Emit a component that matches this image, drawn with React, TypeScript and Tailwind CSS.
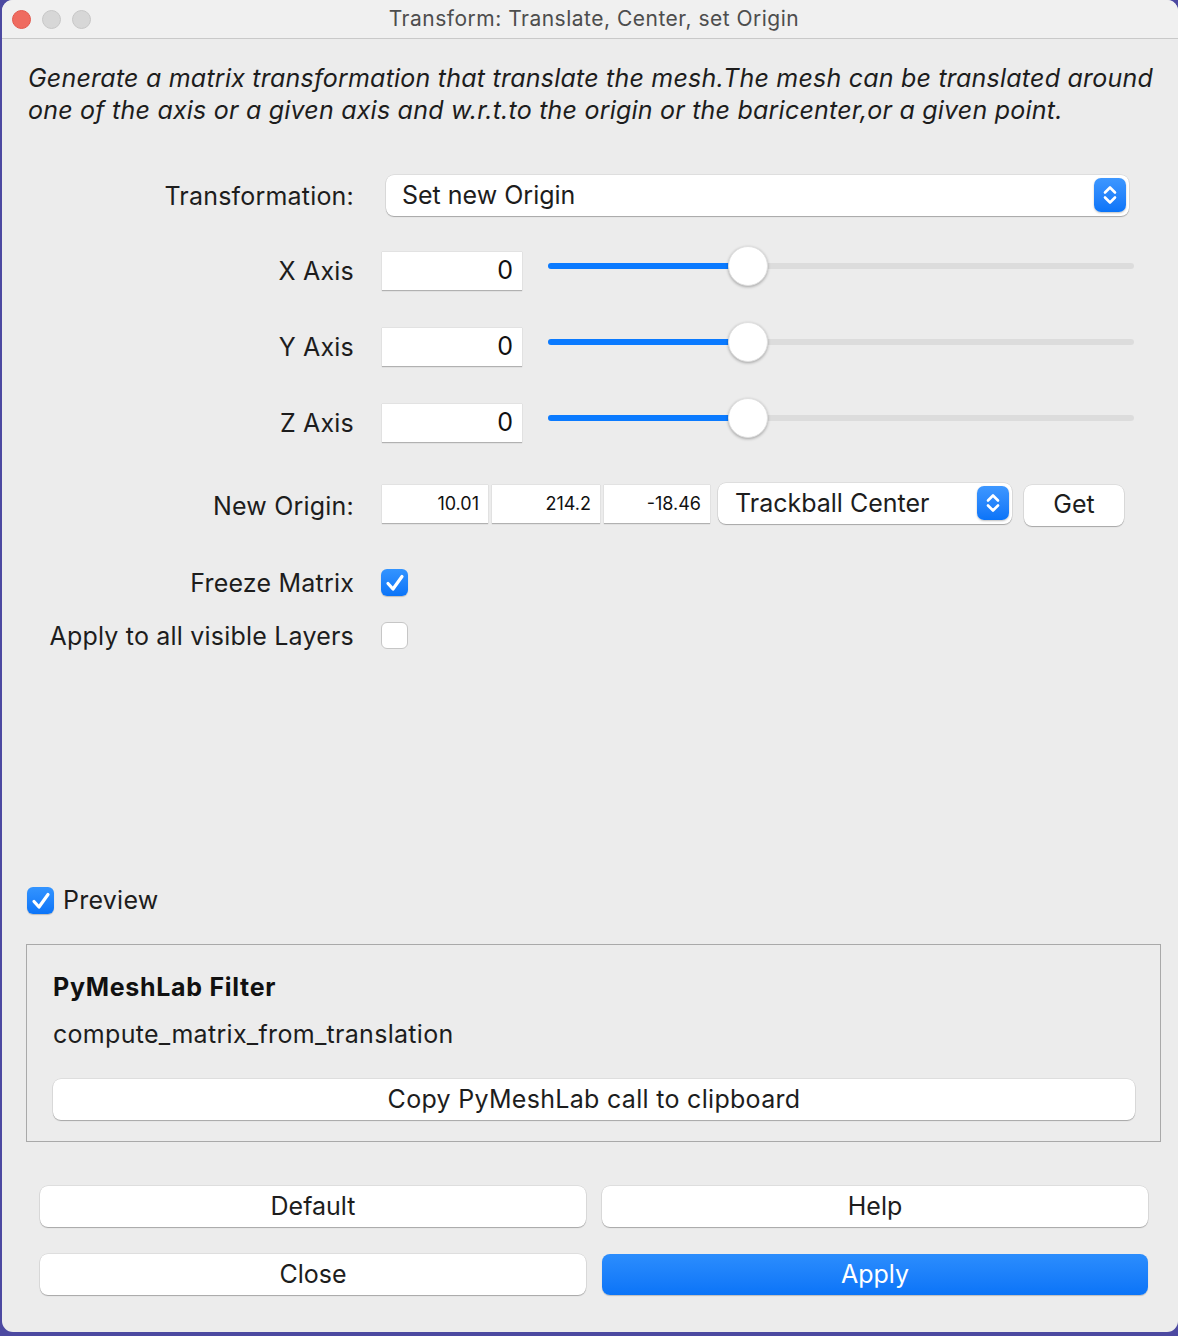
import React from "react";

const font = { fontFamily: "Inter, 'Liberation Sans', sans-serif" };

function Stepper({ size = 34 }: { size?: number }) {
  return (
    <div
      className="flex items-center justify-center rounded-[7px] bg-gradient-to-b from-[#3d97ff] to-[#0a74f8] shadow-[0_1px_2px_rgba(0,0,0,0.25)]"
      style={{ width: size - 2, height: size }}
    >
      <svg width="16" height="24" viewBox="0 0 16 24" fill="none">
        <path d="M3 9.5 L8 4.5 L13 9.5" stroke="white" strokeWidth="2.6" strokeLinecap="round" strokeLinejoin="round" />
        <path d="M3 14.5 L8 19.5 L13 14.5" stroke="white" strokeWidth="2.6" strokeLinecap="round" strokeLinejoin="round" />
      </svg>
    </div>
  );
}

function Check({ checked }: { checked: boolean }) {
  if (!checked)
    return <div className="w-[27px] h-[27px] rounded-[6px] bg-white border border-[#c6c6c6]" />;
  return (
    <div className="w-[27px] h-[27px] rounded-[6px] bg-gradient-to-b from-[#3394ff] to-[#0a74f8] flex items-center justify-center shadow-[0_1px_1px_rgba(0,0,0,0.2)]">
      <svg width="24" height="24" viewBox="0 0 24 24" fill="none">
        <path d="M5 12.5 L10 18 L19 5.5" stroke="white" strokeWidth="3.2" strokeLinecap="round" strokeLinejoin="round" />
      </svg>
    </div>
  );
}

function NumInput({ value, w, small }: { value: string; w: number; small?: boolean }) {
  return (
    <div
      className={`h-[39px] bg-white flex items-center justify-end shadow-[0_1px_1px_rgba(0,0,0,0.25)] border-t border-[#e2e2e2] ${small ? "text-[18px] pr-[9px]" : "text-[25px] pr-[9px]"} text-[#111]`}
      style={{ width: w }}
    >
      {value}
    </div>
  );
}

function Slider() {
  return (
    <div className="relative w-[586px] h-[40px] flex items-center">
      <div className="absolute left-0 right-0 h-[6px] rounded-full bg-[#dcdcdc]" />
      <div className="absolute left-0 w-[199px] h-[6px] rounded-full bg-[#0a7aff]" />
      <div className="absolute left-[180px] w-[40px] h-[40px] rounded-full bg-white shadow-[0_1px_3px_rgba(0,0,0,0.3)] border border-[#e0e0e0]" />
    </div>
  );
}

function Label({ children }: { children: React.ReactNode }) {
  return (
    <div className="w-[352px] pt-[3px] text-right text-[25px] text-[#1d1d1d] tracking-[0.2px] shrink-0">{children}</div>
  );
}

function Btn({ children, blue, w }: { children: React.ReactNode; blue?: boolean; w?: number }) {
  return (
    <div
      className={`h-[41px] rounded-[8px] flex items-center justify-center text-[25px] ${
        blue
          ? "bg-gradient-to-b from-[#2b8dfd] to-[#0a74f8] text-white shadow-[0_1px_1px_rgba(0,0,0,0.2)]"
          : "bg-white text-[#1d1d1d] shadow-[0_0_0_0.5px_rgba(0,0,0,0.12),0_1px_1px_rgba(0,0,0,0.25)]"
      }`}
      style={w ? { width: w } : undefined}
    >
      {children}
    </div>
  );
}

export default function App() {
  return (
    <div className="w-[1178px] h-[1336px] bg-[#4c49a1] pl-[2px] pb-[4px] overflow-hidden" style={font}>
      <div className="w-full h-full rounded-[11px] bg-[#ececec] overflow-hidden flex flex-col">
        {/* title bar */}
        <div className="relative h-[39px] bg-[#f0f0f0] border-b border-[#c9c9c9] flex items-center shrink-0">
          <div className="flex gap-[11px] pl-[10px]">
            <div className="w-[19px] h-[19px] rounded-full bg-[#ef6b60] border border-[#e2584d]" />
            <div className="w-[19px] h-[19px] rounded-full bg-[#d7d7d7] border border-[#c7c7c7]" />
            <div className="w-[19px] h-[19px] rounded-full bg-[#d7d7d7] border border-[#c7c7c7]" />
          </div>
          <div className="absolute inset-0 flex items-center justify-center text-[21px] tracking-[0.5px] text-[#4d4d4d] pl-[8px]">
            Transform: Translate, Center, set Origin
          </div>
        </div>

        {/* description */}
        <div className="pl-[26px] pr-[10px] pt-[23px] italic text-[25px] leading-[32px] text-[#1d1d1d] tracking-[0.22px]">
          Generate a matrix transformation that translate the mesh.The mesh can be translated around one of the axis or a given axis and w.r.t.to the origin or the baricenter,or a given point.
        </div>

        {/* Transformation */}
        <div className="flex items-center mt-[49px] h-[40px]">
          <Label>Transformation:</Label>
          <div className="ml-[32px] w-[743px] h-[41px] bg-white rounded-[8px] shadow-[0_0_0_0.5px_rgba(0,0,0,0.12),0_1px_1px_rgba(0,0,0,0.25)] flex items-center justify-between pl-[16px] pr-[3px]">
            <span className="text-[25px] text-[#1d1d1d] pt-[2px]">Set new Origin</span>
            <Stepper />
          </div>
        </div>

        {/* Axes */}
        {["X Axis", "Y Axis", "Z Axis"].map((l, i) => (
          <div key={l} className={`flex items-center h-[40px] ${i === 0 ? "mt-[35px]" : "mt-[36px]"}`}>
            <Label>{l}</Label>
            <div className="ml-[28px]">
              <NumInput value="0" w={140} />
            </div>
            <div className="ml-[26px] -mt-[8px]">
              <Slider />
            </div>
          </div>
        ))}

        {/* New Origin */}
        <div className="flex items-center h-[40px] mt-[41px]">
          <Label>
            <span className="relative top-[2px]">New Origin:</span>
          </Label>
          <div className="ml-[28px] flex gap-[4px]">
            <NumInput value="10.01" w={106} small />
            <NumInput value="214.2" w={108} small />
            <NumInput value="-18.46" w={106} small />
          </div>
          <div className="ml-[8px] w-[294px] h-[41px] bg-white rounded-[8px] shadow-[0_0_0_0.5px_rgba(0,0,0,0.12),0_1px_1px_rgba(0,0,0,0.25)] flex items-center justify-between pl-[17px] pr-[3px]">
            <span className="text-[25px] text-[#1d1d1d] pt-[2px]">Trackball Center</span>
            <Stepper />
          </div>
          <div className="ml-[12px] mt-[4px]">
            <Btn w={100}>Get</Btn>
          </div>
        </div>

        {/* checkboxes */}
        <div className="flex items-center h-[27px] mt-[46px]">
          <Label>Freeze Matrix</Label>
          <div className="ml-[27px]">
            <Check checked />
          </div>
        </div>
        <div className="flex items-center h-[27px] mt-[26px]">
          <Label>Apply to all visible Layers</Label>
          <div className="ml-[27px]">
            <Check checked={false} />
          </div>
        </div>

        {/* Preview */}
        <div className="flex items-center h-[27px] mt-[238px] pl-[25px] gap-[9px]">
          <Check checked />
          <span className="text-[25px] text-[#1d1d1d] tracking-[0.25px]">Preview</span>
        </div>

        {/* group box */}
        <div className="mt-[30px] ml-[24px] w-[1135px] h-[198px] border border-[#a9a9a9] pl-[26px] pr-[25px]">
          <div className="mt-[26px] text-[25px] font-bold text-[#111] leading-[32px] tracking-[0.7px]">PyMeshLab Filter</div>
          <div className="mt-[15px] text-[25px] text-[#1d1d1d] leading-[32px] tracking-[0.3px]">compute_matrix_from_translation</div>
          <div className="mt-[29px]">
            <Btn>
              <span className="tracking-[0.3px]">Copy PyMeshLab call to clipboard</span>
            </Btn>
          </div>
        </div>

        {/* bottom buttons */}
        <div className="mt-[44px] pl-[38px] pr-[30px] grid grid-cols-2 gap-x-[16px] gap-y-[27px]">
          <Btn>Default</Btn>
          <Btn>Help</Btn>
          <Btn>Close</Btn>
          <Btn blue>Apply</Btn>
        </div>
      </div>
    </div>
  );
}
